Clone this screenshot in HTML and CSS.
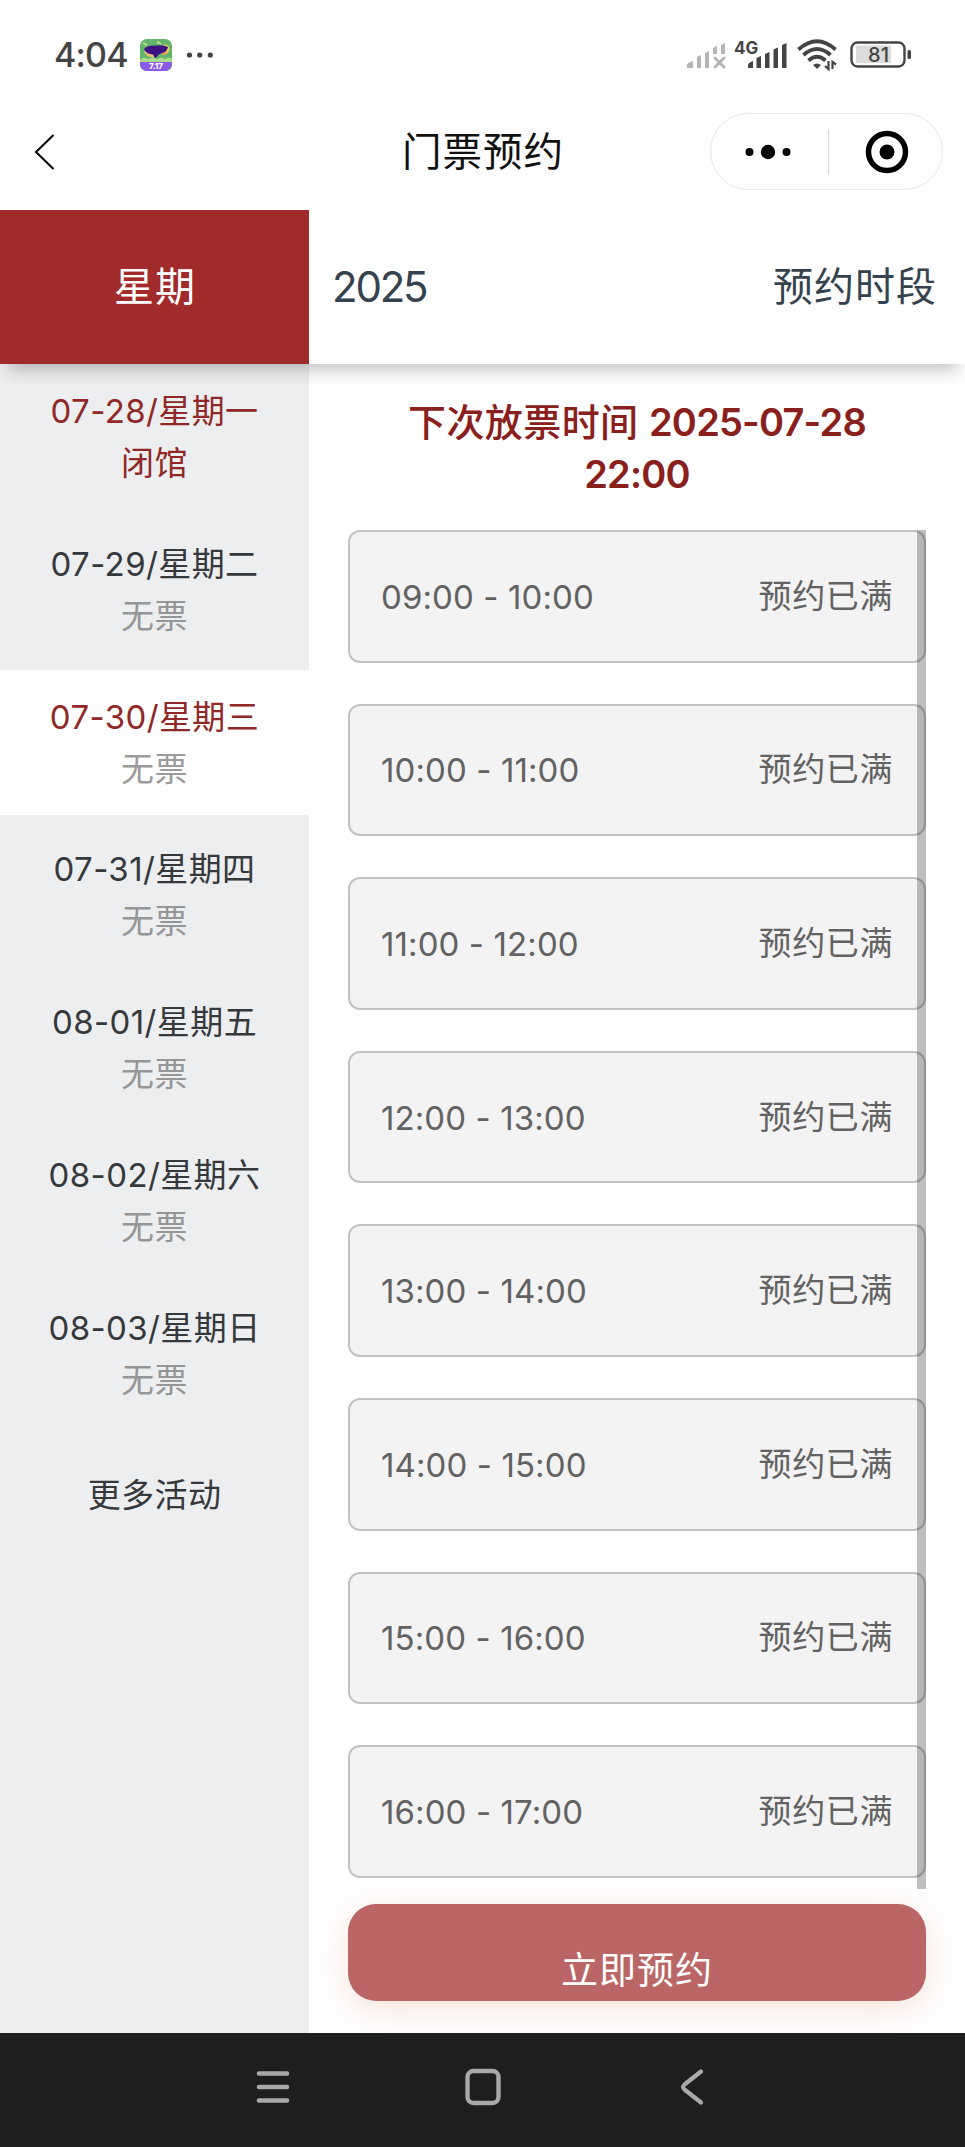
FILE: index.html
```html
<!DOCTYPE html>
<html lang="zh-CN">
<head>
  <meta charset="UTF-8">
  <meta name="viewport" content="width=device-width, initial-scale=1.0">
  <title>门票预约</title>
  <link rel="stylesheet" href="styles.css">
</head>
<body>
  <div class="status-bar">
    <span class="clock">4:04</span>
    <svg class="app-icon" width="32" height="32" viewBox="0 0 32 32">
      <defs>
        <clipPath id="round"><rect width="32" height="32" rx="7"/></clipPath>
      </defs>
      <g clip-path="url(#round)">
        <rect width="32" height="32" fill="#62b36b"/>
        <circle cx="25" cy="10" r="4.5" fill="#e3d45c"/>
        <path d="M3 4l4 2M17 3l4 2" stroke="#b9dd8c" stroke-width="2"/>
        <path d="M0 21q4-4 8-1q5-3 9 0q5-3 8 0q4-3 7 0v4H0z" fill="#a9dc8a"/>
        <path d="M5 12l4 4l5 1" fill="none" stroke="#f0c27a" stroke-width="3"/>
        <path d="M22 15l5-2" stroke="#f0a05a" stroke-width="3"/>
        <path d="M4 10Q7 6 16 6.500Q24 5.500 28 8Q27 13 22 14Q18 15 17 18L15 19L13 15.500Q6 15 4 10z" fill="#3c1283"/>
        <rect y="23" width="32" height="9" fill="#8a5be8"/>
      </g>
      <text class="app-label" x="16" y="30" text-anchor="middle">7.17</text>
    </svg>
    <svg class="more-dots" width="28" height="8" viewBox="0 0 28 8" fill="#444">
      <circle cx="3.5" cy="4" r="2.6"/><circle cx="13.7" cy="4" r="2.6"/><circle cx="24.3" cy="4" r="2.6"/>
    </svg>
    <div class="status-right">
      <svg width="40" height="30" viewBox="0 0 40 30" fill="#b5b5b5">
        <path d="M0 28v-3q0-2 6-4v7zM10 28V17l4-2v13zM18 28V13l4-2v17zM26 14V8l4-2v8zM34 14V5l4-2v11z"/>
        <path d="M28 18l9 9M37 18l-9 9" stroke="#b5b5b5" stroke-width="3" stroke-linecap="round"/>
      </svg>
      <svg class="signal" width="54" height="30" viewBox="0 0 54 30" fill="#444">
        <text class="net-label" x="0" y="14">4G</text>
        <path d="M14 28v-3q0-2 5-4v7zM22.500 28V18l4.500-2v12zM31 28V14l4.500-2v16zM39.500 28V9.500l4.500-2V28zM48 28V5l4.500-2v25z"/>
      </svg>
      <svg class="wifi" width="40" height="32" viewBox="0 0 40 32" fill="none" stroke="#444" stroke-width="3.800">
        <path d="M1.500 10.500Q20-6 38.500 10.500M6.500 16Q20 4 33.500 16M11.500 21.500Q20 14 28.500 21.500"/>
        <path d="M16 26q4-3 8 0l-4 4z" fill="#444" stroke="none"/>
        <path d="M31.500 22v8l-3.500-3M35.500 30v-7l3.500 2.500" stroke-width="2.200"/>
      </svg>
      <svg class="battery" width="62" height="28" viewBox="0 0 62 28">
        <rect x="6" y="4.500" width="35" height="17.500" fill="#dcdcdc"/>
        <rect x="1.500" y="1.500" width="53" height="24" rx="6" fill="none" stroke="#444" stroke-width="2.400"/>
        <rect x="57.500" y="9" width="3.500" height="9" rx="1.500" fill="#444"/>
        <text class="battery-text" x="28.500" y="20.500" text-anchor="middle">81</text>
      </svg>
    </div>
  </div>

  <div class="nav-bar">
    <svg class="back" width="22" height="38" viewBox="0 0 22 38" fill="none" stroke="#000" stroke-width="2">
      <path d="M19.500 2L2 19l17.500 17"/>
    </svg>
    <h1>门票预约</h1>
    <div class="capsule">
      <svg width="46" height="16" viewBox="0 0 46 16">
        <circle cx="4.500" cy="8" r="4"/><circle cx="23" cy="8" r="7.200"/><circle cx="41.500" cy="8" r="4"/>
      </svg>
      <span class="divider"></span>
      <svg width="44" height="44" viewBox="0 0 44 44">
        <circle cx="22" cy="22" r="18.500" fill="none" stroke="#000" stroke-width="5.500"/>
        <circle cx="22" cy="22" r="7.500"/>
      </svg>
    </div>
  </div>

  <div class="table-head">
    <div class="head-week">星期</div>
    <div class="head-main">
      <span class="year">2025</span>
      <span>预约时段</span>
    </div>
  </div>

  <div class="content">
    <div class="sidebar">
      <div class="day closed"><p>07-28/星期一</p><p class="state">闭馆</p></div>
      <div class="day"><p>07-29/星期二</p><p class="state">无票</p></div>
      <div class="day active"><p>07-30/星期三</p><p class="state">无票</p></div>
      <div class="day"><p>07-31/星期四</p><p class="state">无票</p></div>
      <div class="day"><p>08-01/星期五</p><p class="state">无票</p></div>
      <div class="day"><p>08-02/星期六</p><p class="state">无票</p></div>
      <div class="day"><p>08-03/星期日</p><p class="state">无票</p></div>
      <div class="more">更多活动</div>
    </div>

    <div class="main">
      <div class="notice">下次放票时间 <span class="num">2025-07-28<br>22:00</span></div>
      <div class="slots">
        <div class="slot"><span class="time">09:00 - 10:00</span><span class="full">预约已满</span></div>
        <div class="slot"><span class="time">10:00 - 11:00</span><span class="full">预约已满</span></div>
        <div class="slot"><span class="time">11:00 - 12:00</span><span class="full">预约已满</span></div>
        <div class="slot"><span class="time">12:00 - 13:00</span><span class="full">预约已满</span></div>
        <div class="slot"><span class="time">13:00 - 14:00</span><span class="full">预约已满</span></div>
        <div class="slot"><span class="time">14:00 - 15:00</span><span class="full">预约已满</span></div>
        <div class="slot"><span class="time">15:00 - 16:00</span><span class="full">预约已满</span></div>
        <div class="slot"><span class="time">16:00 - 17:00</span><span class="full">预约已满</span></div>
        <div class="scrollbar"></div>
      </div>
      <div class="submit">立即预约</div>
    </div>
  </div>

  <div class="system-nav">
    <svg width="36" height="38" viewBox="0 0 36 38" fill="none" stroke="#a9a9a9" stroke-width="4.600" stroke-linecap="round">
      <path d="M4 5.500h28M4 19h28M4 32.500h28"/>
    </svg>
    <svg class="home" width="38" height="38" viewBox="0 0 38 38" fill="none" stroke="#a9a9a9" stroke-width="4.400">
      <rect x="3.500" y="3" width="31" height="32" rx="6"/>
    </svg>
    <svg width="26" height="38" viewBox="0 0 26 38" fill="none" stroke="#a9a9a9" stroke-width="4.200" stroke-linecap="round">
      <path d="M22 3.500L5.500 16.500Q2.500 19 5.500 21.500L22 34.500"/>
    </svg>
  </div>
</body>
</html>
```
FILE: styles.css
```css
* {
  box-sizing: border-box;
}
body {
  margin: 0;
  width: 965px;
  height: 2147px;
  display: flex;
  flex-direction: column;
  overflow: hidden;
  background: #fefefe;
  font-family: Inter, "Noto Sans CJK SC", sans-serif;
  color: #35393c;
}
p, h1 {
  margin: 0;
}
svg {
  display: block;
  flex: none;
  overflow: visible;
}

/* phone status bar */
.status-bar {
  height: 109px;
  padding: 0 53px 0 54px;
  display: flex;
  align-items: center;
  color: #444;
}
.clock {
  width: 86px;
  font-size: 34px;
  font-weight: 500;
  letter-spacing: -0.8px;
}
.more-dots {
  margin-left: 14px;
}
.app-label {
  font-size: 8px;
  font-weight: 800;
  fill: #fff;
}
.status-right {
  margin-left: auto;
  display: flex;
  align-items: center;
}
.signal {
  margin-left: 7px;
}
.net-label {
  font-size: 17px;
  font-weight: 700;
}
.wifi {
  margin-left: 9px;
}
.battery {
  margin-left: 13px;
}
.battery-text {
  font-size: 20px;
  font-weight: 500;
  fill: #444;
}

/* title bar */
.nav-bar {
  height: 101px;
  padding: 4px 22px 20px 34px;
  display: grid;
  grid-template-columns: 233px 1fr 233px;
  align-items: center;
}
.nav-bar h1 {
  font-size: 39.5px;
  font-weight: 400;
  letter-spacing: 1px;
  text-align: center;
  color: #111;
  padding: 0 11px 6px 0;
}
.capsule {
  height: 77px;
  padding: 0 33px 0 34px;
  display: flex;
  align-items: center;
  justify-content: space-between;
  border: 1.5px solid #e8e8e8;
  border-radius: 39px;
}
.divider {
  width: 1px;
  height: 46px;
  background: #d8d8d8;
}

/* table head */
.table-head {
  position: relative;
  z-index: 1;
  height: 154px;
  display: flex;
  font-size: 40px;
  line-height: 154px;
  letter-spacing: 1px;
  background: #fefefe;
  box-shadow: 0 14px 16px -8px rgba(0, 0, 0, 0.24);
}
.head-week {
  width: 309px;
  padding-left: 1px;
  text-align: center;
  color: #fff;
  background: #a02b2a;
}
.head-main {
  flex: 1;
  padding: 0 28px 0 23px;
  display: flex;
  justify-content: space-between;
  color: #34434f;
}
.year {
  font-size: 42px;
  letter-spacing: -2.2px;
}

.content {
  flex: 1;
  display: flex;
  min-height: 0;
}

/* week list */
.sidebar {
  width: 309px;
  font-size: 33px;
  letter-spacing: 0.4px;
  text-align: center;
  background: #edeef0;
}
.day {
  height: 145.5px;
  margin-bottom: 7.3px;
  padding-top: 21px;
  line-height: 52px;
}
.day .state {
  color: #949698;
}
.day.active {
  background: #fefefe;
}
.day.closed,
.day.closed .state,
.day.active {
  color: #8f2827;
}
.day.active .state {
  color: #9b9b9b;
}
.more {
  line-height: 122px;
}

/* time slots */
.main {
  flex: 1;
  padding: 32px 39px 0;
  overflow: hidden;
}
.notice {
  height: 134px;
  font-size: 38px;
  font-weight: 500;
  line-height: 52px;
  letter-spacing: 0.4px;
  text-align: center;
  color: #8a201c;
}
.notice .num {
  font-weight: 600;
  letter-spacing: -0.8px;
}
.slots {
  position: relative;
  height: 1359px;
}
.slot {
  height: 132.6px;
  margin-bottom: 41px;
  padding: 0 31px;
  display: flex;
  align-items: center;
  justify-content: space-between;
  font-size: 33px;
  line-height: 48px;
  letter-spacing: 0.6px;
  color: #626262;
  background: #f3f3f3;
  border: 2px solid #c2c2c2;
  border-radius: 12px;
}
.time {
  padding-top: 1px;
  letter-spacing: 0.1px;
}
.full {
  padding-bottom: 1px;
}
.scrollbar {
  position: absolute;
  top: 0;
  right: 0;
  width: 9px;
  height: 100%;
  background: rgba(0, 0, 0, 0.25);
}
.submit {
  height: 97px;
  margin-top: 15px;
  padding-top: 37px;
  font-size: 37px;
  line-height: 60px;
  letter-spacing: 1px;
  text-align: center;
  color: #fff;
  background: #bb6666;
  border-radius: 28px;
  box-shadow: 0 8px 32px rgba(225, 120, 80, 0.2);
}

/* phone navigation keys */
.system-nav {
  height: 114px;
  padding: 0 260px 6px 255px;
  display: flex;
  align-items: center;
  justify-content: space-between;
  background: #1e1e1e;
}
.home {
  margin-right: 5px;
}
```
